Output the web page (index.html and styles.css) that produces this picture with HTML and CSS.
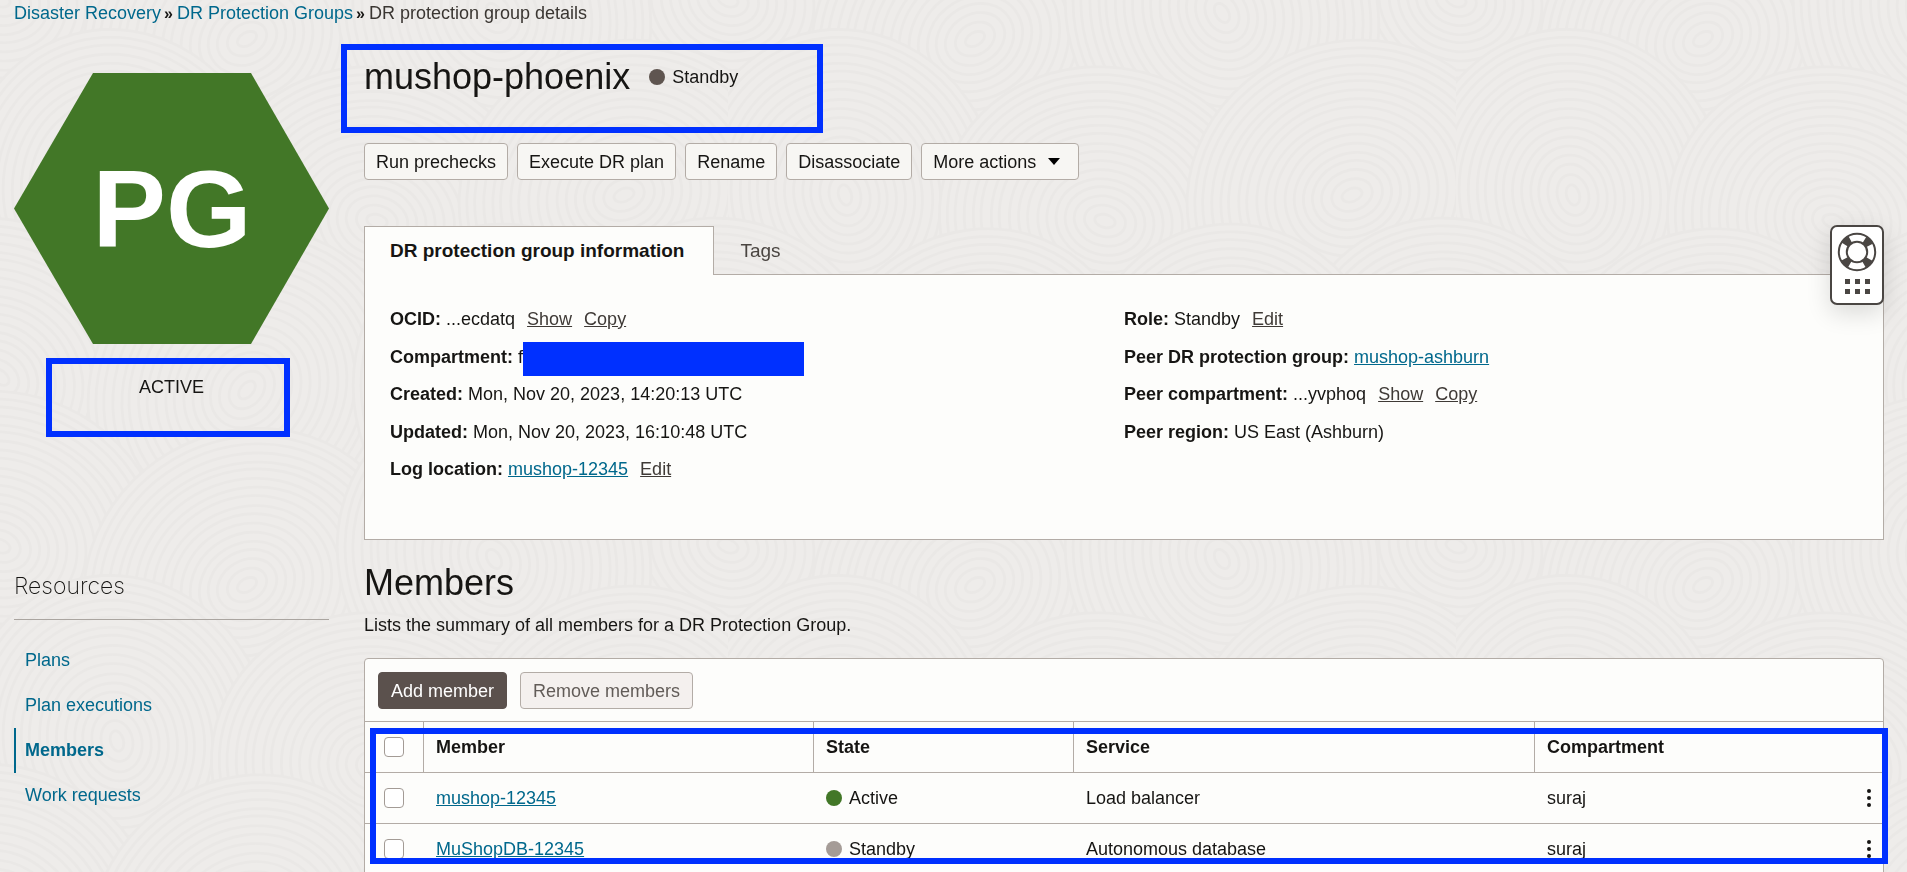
FILE: index.html
```html
<!DOCTYPE html>
<html lang="en">
<head>
<meta charset="utf-8">
<title>DR protection group details</title>
<link rel="stylesheet" href="styles.css">
</head>
<body>
<svg class="texture" aria-hidden="true">
  <defs>
    <g id="rings">
      <ellipse class="ring-base" rx="128" ry="118"/>
      <ellipse rx="128" ry="118"/><ellipse rx="122" ry="112"/><ellipse rx="116" ry="106"/><ellipse rx="109" ry="99"/>
      <ellipse rx="102" ry="92"/><ellipse rx="96" ry="87"/><ellipse rx="88" ry="80"/><ellipse rx="82" ry="73"/>
      <ellipse rx="74" ry="67"/><ellipse rx="67" ry="59"/><ellipse rx="60" ry="53"/><ellipse rx="52" ry="46"/>
      <ellipse rx="45" ry="39"/><ellipse rx="38" ry="32"/><ellipse rx="31" ry="26"/><ellipse rx="24" ry="19"/>
      <ellipse rx="16" ry="12"/><ellipse rx="8" ry="5"/>
    </g>
    <pattern id="contours" width="560" height="420" patternUnits="userSpaceOnUse" patternTransform="scale(1.3)">
      <use href="#rings" transform="translate(0 0) rotate(20)"/>
      <use href="#rings" transform="translate(560 0) rotate(20)"/>
      <use href="#rings" transform="translate(190 30) rotate(-30)"/>
      <use href="#rings" transform="translate(380 10) rotate(60)"/>
      <use href="#rings" transform="translate(90 150) rotate(75)"/>
      <use href="#rings" transform="translate(290 170) rotate(15)"/>
      <use href="#rings" transform="translate(480 150) rotate(-20)"/>
      <use href="#rings" transform="translate(0 290) rotate(40)"/>
      <use href="#rings" transform="translate(560 290) rotate(40)"/>
      <use href="#rings" transform="translate(190 300) rotate(-50)"/>
      <use href="#rings" transform="translate(390 300) rotate(80)"/>
      <use href="#rings" transform="translate(0 420) rotate(20)"/>
      <use href="#rings" transform="translate(560 420) rotate(20)"/>
      <use href="#rings" transform="translate(190 450) rotate(-30)"/>
      <use href="#rings" transform="translate(380 430) rotate(60)"/>
    </pattern>
  </defs>
  <rect width="100%" height="100%" fill="url(#contours)"/>
</svg>

<nav class="breadcrumb" aria-label="Breadcrumb">
  <a href="#">Disaster Recovery</a><span class="sep">»</span><a href="#">DR Protection Groups</a><span class="sep">»</span><span class="current">DR protection group details</span>
</nav>

<div class="layout">
  <aside class="side">
    <svg class="hexagon" viewBox="0 0 315 271" role="img" aria-label="PG">
      <polygon points="79,0 237,0 315,135.500 237,271 79,271 0,135.500"/>
      <text x="158" y="174" text-anchor="middle">PG</text>
    </svg>
    <div class="state-box">ACTIVE<span class="frame frame-state"></span></div>
    <h2 class="side-title">Resources</h2>
    <nav class="side-nav" aria-label="Resources">
      <a href="#">Plans</a>
      <a href="#">Plan executions</a>
      <a href="#" class="selected" aria-current="page">Members</a>
      <a href="#">Work requests</a>
    </nav>
  </aside>

  <main class="main">
    <header class="head">
      <h1>mushop-phoenix</h1>
      <span class="status"><i class="dot dot-dark"></i>Standby</span>
      <span class="frame frame-head"></span>
    </header>

    <div class="actions">
      <button type="button" class="btn">Run prechecks</button>
      <button type="button" class="btn">Execute DR plan</button>
      <button type="button" class="btn">Rename</button>
      <button type="button" class="btn">Disassociate</button>
      <button type="button" class="btn btn-menu">More actions
        <svg width="12" height="7" viewBox="0 0 12 7" aria-hidden="true"><path d="M0 0h12L6 7z"/></svg>
      </button>
    </div>

    <div class="tabs" role="tablist">
      <button type="button" role="tab" class="tab tab-on" aria-selected="true">DR protection group information</button>
      <button type="button" role="tab" class="tab" aria-selected="false">Tags</button>
    </div>
    <section class="panel">
      <ul class="facts">
        <li><b>OCID:</b> ...ecdatq <a href="#">Show</a> <a href="#">Copy</a></li>
        <li><b>Compartment:</b> <span class="value">fs<i class="redaction"></i></span></li>
        <li><b>Created:</b> Mon, Nov 20, 2023, 14:20:13 UTC</li>
        <li><b>Updated:</b> Mon, Nov 20, 2023, 16:10:48 UTC</li>
        <li><b>Log location:</b> <a href="#" class="link">mushop-12345</a> <a href="#">Edit</a></li>
      </ul>
      <ul class="facts">
        <li><b>Role:</b> Standby <a href="#">Edit</a></li>
        <li><b>Peer DR protection group:</b> <a href="#" class="link">mushop-ashburn</a></li>
        <li><b>Peer compartment:</b> ...yvphoq <a href="#">Show</a> <a href="#">Copy</a></li>
        <li><b>Peer region:</b> US East (Ashburn)</li>
      </ul>
    </section>

    <h2 class="section-title">Members</h2>
    <p class="section-note">Lists the summary of all members for a DR Protection Group.</p>

    <section class="card">
      <div class="toolbar">
        <button type="button" class="btn btn-primary">Add member</button>
        <button type="button" class="btn btn-off" disabled>Remove members</button>
      </div>
      <div class="table-wrap">
        <table>
          <colgroup><col class="c-check"><col class="c-member"><col class="c-state"><col class="c-service"><col><col class="c-menu"></colgroup>
          <thead>
            <tr><th><input type="checkbox" aria-label="Select all"></th><th>Member</th><th>State</th><th>Service</th><th colspan="2">Compartment</th></tr>
          </thead>
          <tbody>
            <tr>
              <td><input type="checkbox" aria-label="Select mushop-12345"></td>
              <td><a href="#" class="link">mushop-12345</a></td>
              <td><span class="status"><i class="dot dot-green"></i>Active</span></td>
              <td>Load balancer</td><td>suraj</td>
              <td><button type="button" class="kebab" aria-label="Actions"><svg width="6" height="20" viewBox="0 0 6 20"><circle cx="3" cy="3" r="2"/><circle cx="3" cy="10" r="2"/><circle cx="3" cy="17" r="2"/></svg></button></td>
            </tr>
            <tr>
              <td><input type="checkbox" aria-label="Select MuShopDB-12345"></td>
              <td><a href="#" class="link">MuShopDB-12345</a></td>
              <td><span class="status"><i class="dot dot-grey"></i>Standby</span></td>
              <td>Autonomous database</td><td>suraj</td>
              <td><button type="button" class="kebab" aria-label="Actions"><svg width="6" height="20" viewBox="0 0 6 20"><circle cx="3" cy="3" r="2"/><circle cx="3" cy="10" r="2"/><circle cx="3" cy="17" r="2"/></svg></button></td>
            </tr>
          </tbody>
        </table>
        <span class="frame frame-table"></span>
      </div>
    </section>
  </main>
</div>

<button type="button" class="help" aria-label="Help">
  <svg width="40" height="40" viewBox="0 0 40 40" aria-hidden="true">
    <circle cx="20" cy="20" r="18.200" class="line"/>
    <circle cx="20" cy="20" r="10.200" class="line"/>
    <circle cx="20" cy="20" r="14.200" class="wraps"/>
  </svg>
  <svg width="25" height="15" viewBox="0 0 25 15" aria-hidden="true">
    <path d="M0 0h5v5H0zM10 0h5v5h-5zM20 0h5v5h-5zM0 10h5v5H0zM10 10h5v5h-5zM20 10h5v5h-5z"/>
  </svg>
</button>
</body>
</html>
```

FILE: styles.css
```css
* { box-sizing: border-box; }

body {
  margin: 0;
  height: 100vh;
  overflow: hidden;
  position: relative;
  background: #eeecea;
  color: #161513;
  font: 18px/24px "Liberation Sans", Arial, sans-serif;
}

h1, h2, p, ul { margin: 0; padding: 0; font-weight: 400; }
ul { list-style: none; }
a { color: #00688c; text-decoration: none; }
button { font: inherit; color: inherit; cursor: pointer; }

.texture { position: fixed; inset: 0; width: 100%; height: 100%; z-index: -1; }
.texture ellipse { fill: none; stroke: #eae8e6; stroke-width: 2; }
.texture .ring-base { fill: #eeecea; stroke: none; }

/* blue callouts drawn over the content */
.frame { position: absolute; border: 6px solid #0030ff; pointer-events: none; }
.frame-state { inset: 0 39px 0 32px; }
.frame-head { top: 0; bottom: 0; left: -23px; width: 482px; }
.frame-table { top: 7px; left: 5px; right: -5px; height: 136px; }

.breadcrumb { padding: 2px 14px 0; line-height: 22px; }
.breadcrumb .sep { margin: 0 4px 0 3px; font-size: 16px; font-weight: 700; }
.breadcrumb .current { color: #3a3632; }

.layout {
  display: grid;
  grid-template-columns: 315px minmax(0, 1fr);
  column-gap: 35px;
  padding: 0 23px 0 14px;
}

.hexagon { display: block; width: 100%; margin-top: 48px; }
.hexagon polygon { fill: #427727; }
.hexagon text { fill: #fff; font-size: 110px; font-weight: 700; }

.state-box { position: relative; margin-top: 14px; padding: 17px 0 38px; text-align: center; }

.side-title {
  margin-top: 134px;
  padding-bottom: 18px;
  border-bottom: 1px solid #aaa5a0;
  font: 200 23px/30px Inter, "Liberation Sans", sans-serif;
}
.side-nav { display: flex; flex-direction: column; margin-top: 18px; }
.side-nav a { padding: 0 9px; border-left: 2px solid transparent; line-height: 45px; }
.side-nav .selected { border-color: #00688c; font-weight: 700; }

.head {
  position: relative;
  display: flex;
  align-items: center;
  gap: 19px;
  margin-top: 19px;
  padding: 11px 0 34px;
}
h1, .section-title { font-size: 36px; line-height: 44px; }

.status { display: flex; align-items: center; gap: 7px; }
.dot { width: 16px; height: 16px; border-radius: 50%; }
.dot-dark { background: #5f5550; }
.dot-green { background: #427727; }
.dot-grey { background: #a59c97; }

.actions { display: flex; gap: 9px; margin-top: 10px; }
.btn {
  height: 37px;
  padding: 0 11px;
  border: 1px solid #b3aca6;
  border-radius: 4px;
  background: #f7f6f3;
}
.btn-menu { display: flex; align-items: center; gap: 12px; padding-right: 18px; }
.btn-primary { border-color: #5b514d; background: #5b514d; color: #fff; }
.btn-off { background: #f4f0ee; color: #625c58; cursor: default; }

.tabs { display: flex; margin-top: 46px; }
.tab { height: 48px; padding: 0 25px; border: 1px solid transparent; border-bottom: 0; background: none; color: #4a4541; font-size: 19px; }
.tab-on {
  position: relative;
  z-index: 1;
  height: 49px;
  margin-bottom: -1px;
  padding-right: 29px;
  border-color: #b3aca6;
  background: #fdfdfb;
  color: #161513;
  font-weight: 700;
}

.panel {
  display: grid;
  grid-template-columns: 1fr 1fr;
  padding: 32px 25px 44px;
  border: 1px solid #b3aca6;
  background: #fdfdfb;
}
.facts { display: grid; grid-template-rows: repeat(5, 1fr); min-height: 188px; }
.facts a { margin-left: 7px; color: #3f3a36; text-decoration: underline; }
.facts .link, .link { margin-left: 0; color: #00688c; text-decoration: underline; }
.value { position: relative; }
.redaction { position: absolute; top: -5px; left: 5px; width: 281px; height: 34px; background: #0030ff; }

.section-title { margin-top: 21px; }
.section-note { margin-top: 8px; }

.card { margin-top: 21px; border: 1px solid #b3aca6; border-radius: 4px; background: #fdfdfb; }
.toolbar { display: flex; gap: 13px; padding: 13px 13px 12px; }
.toolbar .btn { padding: 0 12px; }
.table-wrap { position: relative; }

table { width: 100%; table-layout: fixed; border-collapse: separate; border-spacing: 0; border-top: 1px solid #b3aca6; }
th, td { height: 51px; padding: 0 12px; border-bottom: 1px solid #b3aca6; text-align: left; vertical-align: middle; }
th + th { border-left: 1px solid #b3aca6; }
td + td { padding-left: 13px; }
th:first-child, td:first-child { padding: 0 0 0 19px; }
td:last-child { padding: 0; }
.c-check { width: 58px; }
.c-member { width: 390px; }
.c-state { width: 260px; }
.c-service { width: 461px; }
.c-menu { width: 32px; }

input[type="checkbox"] {
  appearance: none;
  display: block;
  width: 20px;
  height: 20px;
  margin: 0;
  border: 1px solid #a39b95;
  border-radius: 4px;
  background: #fff;
}

.kebab { display: block; margin-left: auto; padding: 0 11px; border: 0; background: none; }
.kebab svg { display: block; fill: #161513; }

.help {
  position: absolute;
  top: 225px;
  right: 23px;
  display: flex;
  flex-direction: column;
  align-items: center;
  gap: 7px;
  width: 54px;
  height: 80px;
  padding: 5px 0 0;
  border: 2px solid #4a4643;
  border-radius: 7px;
  background: #fff;
  box-shadow: 0 8px 24px rgba(0, 0, 0, 0.14);
}
.help svg { fill: #4a4643; flex: none; }
.help .line { fill: none; stroke: #4a4643; stroke-width: 2; }
/* four straps at 45 degrees, each a quarter of the ring apart */
.help .wraps { fill: none; stroke: #4a4643; stroke-width: 8; stroke-dasharray: 7.500 14.805; stroke-dashoffset: -7.400; }
```
